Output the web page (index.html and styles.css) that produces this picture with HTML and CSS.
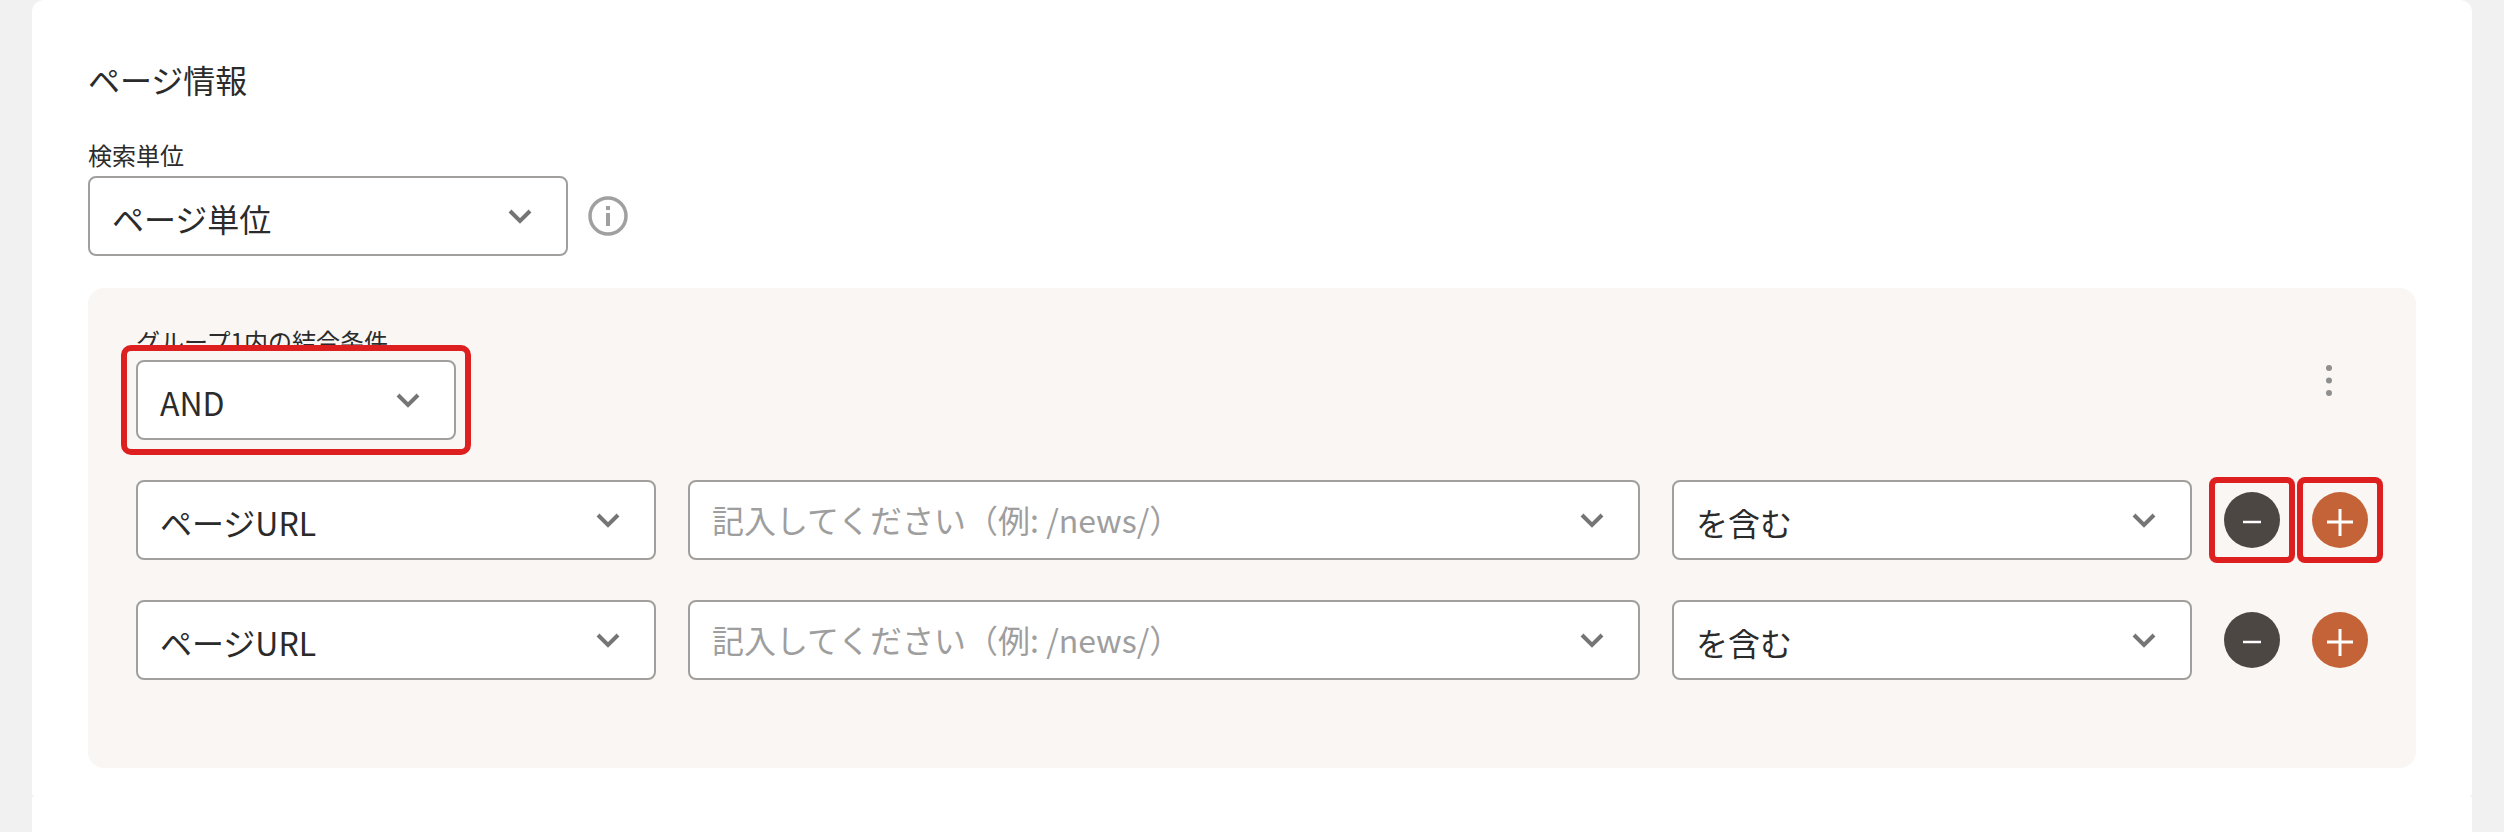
FILE: index.html
```html
<!DOCTYPE html>
<html lang="ja">
<head>
    <meta charset="UTF-8">
    <meta name="viewport" content="width=device-width, initial-scale=1.0">
    <title>ページ情報</title>
    <link rel="stylesheet" href="styles.css">
</head>
<body>

    <svg class="defs" width="0" height="0">
        <symbol id="chevron" viewBox="0 0 24 16">
            <path d="M2 3 L12 13 L22 3" fill="none" stroke="#757575" stroke-width="4"/>
        </symbol>
    </svg>

    <section class="card">
        <h2 class="card-title">ページ情報</h2>

        <p class="field-label">検索単位</p>
        <div class="unit-row">
            <div class="select select-unit">
                <span class="select-text">ページ単位</span>
                <svg class="chevron"><use href="#chevron"/></svg>
            </div>
            <svg class="info-icon" width="40" height="40" viewBox="0 0 40 40">
                <circle cx="20" cy="20" r="18" fill="none" stroke="#a0a0a0" stroke-width="3.5"/>
                <rect x="18" y="10" width="4" height="4" fill="#a0a0a0"/>
                <rect x="18" y="17" width="4" height="13" fill="#a0a0a0"/>
            </svg>
        </div>

        <div class="group">
            <div class="group-head">
                <div>
                    <p class="group-label">グループ1内の結合条件</p>
                    <div class="select select-join marked">
                        <span class="select-text">AND</span>
                        <svg class="chevron"><use href="#chevron"/></svg>
                    </div>
                </div>
                <svg class="kebab" width="8" height="34" viewBox="0 0 8 34">
                    <circle cx="4" cy="4" r="3" fill="#8f8f8f"/>
                    <circle cx="4" cy="16.500" r="3" fill="#8f8f8f"/>
                    <circle cx="4" cy="29" r="3" fill="#8f8f8f"/>
                </svg>
            </div>

            <div class="cond-row">
                <div class="select select-target">
                    <span class="select-text">ページURL</span>
                    <svg class="chevron"><use href="#chevron"/></svg>
                </div>
                <div class="select select-value">
                    <span class="select-text placeholder">記入してください（例: /news/）</span>
                    <svg class="chevron"><use href="#chevron"/></svg>
                </div>
                <div class="select select-target">
                    <span class="select-text">を含む</span>
                    <svg class="chevron"><use href="#chevron"/></svg>
                </div>
                <button class="round-btn btn-minus marked">
                    <svg width="56" height="56" viewBox="0 0 56 56"><path d="M19 30 H37" stroke="#fff" stroke-width="2.500"/></svg>
                </button>
                <button class="round-btn btn-plus marked">
                    <svg width="56" height="56" viewBox="0 0 56 56"><path d="M15 30 H41 M28 17 V44" stroke="#fff" stroke-width="3"/></svg>
                </button>
            </div>

            <div class="cond-row">
                <div class="select select-target">
                    <span class="select-text">ページURL</span>
                    <svg class="chevron"><use href="#chevron"/></svg>
                </div>
                <div class="select select-value">
                    <span class="select-text placeholder">記入してください（例: /news/）</span>
                    <svg class="chevron"><use href="#chevron"/></svg>
                </div>
                <div class="select select-target">
                    <span class="select-text">を含む</span>
                    <svg class="chevron"><use href="#chevron"/></svg>
                </div>
                <button class="round-btn btn-minus">
                    <svg width="56" height="56" viewBox="0 0 56 56"><path d="M19 30 H37" stroke="#fff" stroke-width="2.500"/></svg>
                </button>
                <button class="round-btn btn-plus">
                    <svg width="56" height="56" viewBox="0 0 56 56"><path d="M15 30 H41 M28 17 V44" stroke="#fff" stroke-width="3"/></svg>
                </button>
            </div>
        </div>
    </section>

    <section class="card card-next"></section>

</body>
</html>
```

FILE: styles.css
```css
html, body {
    height: 832px;
    overflow: hidden;
}
body {
    margin: 0;
    padding: 0 32px;
    background-color: #f1f1f1;
    color: #2b2b2b;
    font-family: "Noto Sans CJK JP", "Noto Sans", sans-serif;
}
.defs {
    position: absolute;
}
.card {
    height: 796px;
    box-sizing: border-box;
    padding: 55px 56px 0;
    background-color: #fff;
    border-radius: 12px 12px 3px 3px;
}
.card-next {
    height: 60px;
    padding: 0;
    border-radius: 3px 3px 0 0;
}
.card-title {
    margin: 0 0 36px;
    font-size: 32px;
    font-weight: 400;
    line-height: 48px;
}
.field-label {
    margin: 0 0 5px;
    font-size: 24px;
    line-height: 32px;
}
.unit-row {
    display: flex;
    align-items: center;
    gap: 20px;
}
.select {
    display: flex;
    align-items: center;
    justify-content: space-between;
    height: 80px;
    box-sizing: border-box;
    padding: 0 34px 0 22px;
    background-color: #fff;
    border: 2px solid #a09f9d;
    border-radius: 8px;
}
.select-text {
    padding-top: 4px;
    font-size: 32px;
    line-height: 48px;
}
.placeholder {
    padding: 0 0 2px;
    color: #9e9e9e;
}
.chevron {
    width: 24px;
    height: 16px;
}
.select-unit {
    width: 480px;
}
.select-join {
    width: 320px;
}
.select-target {
    width: 520px;
    flex: none;
}
.select-value {
    flex: 1;
}
.info-icon {
    flex: none;
}
.group {
    margin-top: 32px;
    height: 480px;
    box-sizing: border-box;
    padding: 37px 48px 0;
    background-color: #f9f6f3;
    border-radius: 16px;
}
.group-head {
    display: flex;
    justify-content: space-between;
    align-items: center;
}
.group-label {
    height: 26px;
    margin: 0 0 9px;
    overflow: hidden;
    font-size: 24px;
    line-height: 32px;
}
.kebab {
    margin: 0 35px 4px 0;
}
.cond-row {
    display: flex;
    align-items: center;
    gap: 32px;
    margin-top: 40px;
}
.round-btn {
    width: 56px;
    height: 56px;
    flex: none;
    padding: 0;
    border: none;
    border-radius: 50%;
}
.round-btn svg {
    display: block;
}
.btn-minus {
    background-color: #4d4744;
}
.btn-plus {
    background-color: #c46338;
}
/* red annotation boxes drawn over the screenshot */
.marked {
    position: relative;
}
.marked::after {
    content: "";
    position: absolute;
    inset: -15px;
    border: 6px solid #dd1f1f;
    border-radius: 8px;
}
.select.marked::after {
    inset: -17px;
    border-radius: 10px;
}
```
